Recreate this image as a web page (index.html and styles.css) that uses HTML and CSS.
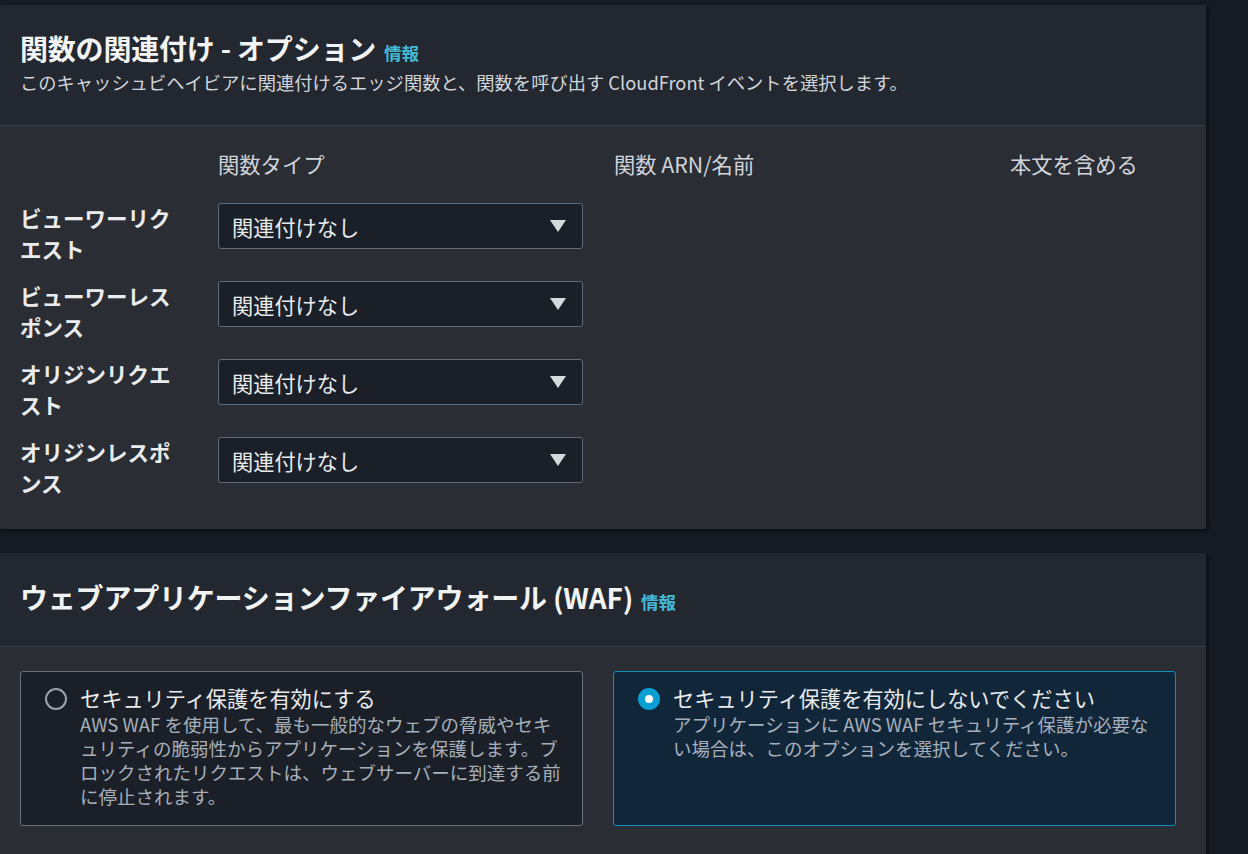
FILE: index.html
```html
<!DOCTYPE html>
<html lang="ja">
<head>
<meta charset="utf-8">
<link rel="stylesheet" href="styles.css">
</head>
<body>
<div class="page">
  <section class="card">
    <header class="card-header">
      <h2 class="title"><span>関数の関連付け - オプション</span><a class="info">情報</a></h2>
      <p class="desc">このキャッシュビヘイビアに関連付けるエッジ関数と、関数を呼び出す CloudFront イベントを選択します。</p>
    </header>
    <div class="card-body">
      <div class="assoc-grid">
        <div></div>
        <div class="col-head">関数タイプ</div>
        <div class="col-head">関数 ARN/名前</div>
        <div class="col-head">本文を含める</div>

        <div class="row-label">ビューワーリクエスト</div>
        <div class="select"><span>関連付けなし</span><svg class="caret" width="16" height="12" viewBox="0 0 16 12"><path d="M0 0H16L8 12Z" fill="#d5dbdb"/></svg></div>
        <div></div><div></div>

        <div class="row-label">ビューワーレスポンス</div>
        <div class="select"><span>関連付けなし</span><svg class="caret" width="16" height="12" viewBox="0 0 16 12"><path d="M0 0H16L8 12Z" fill="#d5dbdb"/></svg></div>
        <div></div><div></div>

        <div class="row-label">オリジンリクエスト</div>
        <div class="select"><span>関連付けなし</span><svg class="caret" width="16" height="12" viewBox="0 0 16 12"><path d="M0 0H16L8 12Z" fill="#d5dbdb"/></svg></div>
        <div></div><div></div>

        <div class="row-label">オリジンレスポンス</div>
        <div class="select"><span>関連付けなし</span><svg class="caret" width="16" height="12" viewBox="0 0 16 12"><path d="M0 0H16L8 12Z" fill="#d5dbdb"/></svg></div>
        <div></div><div></div>
      </div>
    </div>
  </section>

  <section class="card">
    <header class="card-header waf-header">
      <h2 class="title"><span>ウェブアプリケーションファイアウォール (WAF)</span><a class="info">情報</a></h2>
    </header>
    <div class="card-body waf-body">
      <div class="tiles">
        <div class="tile">
          <span class="radio"></span>
          <div class="tile-text">
            <div class="tile-title">セキュリティ保護を有効にする</div>
            <div class="tile-desc">AWS WAF を使用して、最も一般的なウェブの脅威やセキュリティの脆弱性からアプリケーションを保護します。ブロックされたリクエストは、ウェブサーバーに到達する前に停止されます。</div>
          </div>
        </div>
        <div class="tile selected">
          <span class="radio checked"></span>
          <div class="tile-text">
            <div class="tile-title">セキュリティ保護を有効にしないでください</div>
            <div class="tile-desc">アプリケーションに AWS WAF セキュリティ保護が必要ない場合は、このオプションを選択してください。</div>
          </div>
        </div>
      </div>
    </div>
  </section>
</div>
</body>
</html>
```

FILE: styles.css
```css
* { box-sizing: border-box; }
html, body {
  margin: 0;
  padding: 0;
  background: #161a22;
  height: 100%;
  overflow: hidden;
}
body {
  font-family: "Noto Sans CJK JP", "Noto Sans", sans-serif;
  color: #e9ebed;
}
.page {
  padding-top: 5px;
  width: 1206px;
  display: flex;
  flex-direction: column;
  gap: 24px;
}
.card {
  background: #2a2d33;
  box-shadow: 2px 2px 4px rgba(0, 0, 0, 0.45);
}
.card-header {
  background: #23272f;
  border-bottom: 1px solid #3a3e45;
  padding: 26px 20px 31px;
}
.title {
  margin: 0;
  display: flex;
  align-items: baseline;
  gap: 8px;
  font-size: 28px;
  line-height: 34px;
  font-weight: 700;
  color: #f2f3f3;
  letter-spacing: -0.2px;
}
.info {
  font-size: 17.5px;
  line-height: 20px;
  font-weight: 700;
  color: #44b9d6;
  letter-spacing: 0;
}
.desc {
  margin: 5px 0 0;
  font-size: 18.3px;
  line-height: 24px;
  color: #d1d5db;
}
.card-body {
  padding: 24px 20px 31px;
}
.assoc-grid {
  display: grid;
  grid-template-columns: 167px 365px 365px 1fr;
  column-gap: 31px;
  row-gap: 16px;
  align-items: start;
}
.col-head {
  font-size: 21.3px;
  line-height: 28px;
  color: #d1d5db;
  margin-bottom: 8px;
}
.row-label {
  font-size: 21.5px;
  font-weight: 700;
  line-height: 31px;
  color: #e9ebed;
}
.select {
  margin-top: 1px;
  height: 46px;
  background: #1a1f28;
  border: 1px solid #5f6b7a;
  border-radius: 3px;
  display: flex;
  align-items: center;
  justify-content: space-between;
  padding: 0 16px 0 13px;
  font-size: 21.2px;
  color: #e9ebed;
}
.caret { display: block; }
.waf-header {
  padding: 27px 20px 32px;
}
.waf-body {
  padding: 24px 30px 60px 20px;
}
.tiles {
  display: grid;
  grid-template-columns: 563px 563px;
  column-gap: 30px;
}
.tile {
  background: #1a1f28;
  border: 1px solid #687078;
  border-radius: 3px;
  display: flex;
  align-items: flex-start;
  gap: 13px;
  padding: 12px 17px 17px 24px;
  min-height: 155px;
}
.tile.selected {
  background: #12263a;
  border-color: #0f8fbf;
}
.radio {
  flex: none;
  width: 22px;
  height: 22px;
  margin-top: 4px;
  border-radius: 50%;
  border: 2px solid #9ba3ab;
}
.radio.checked {
  border: 7px solid #0aa0d4;
  background: #ffffff;
}
.tile-title {
  font-size: 21.2px;
  line-height: 28px;
  color: #e9ebed;
}
.tile-desc {
  font-size: 18.5px;
  line-height: 24px;
  color: #a7b0ba;
}
```
